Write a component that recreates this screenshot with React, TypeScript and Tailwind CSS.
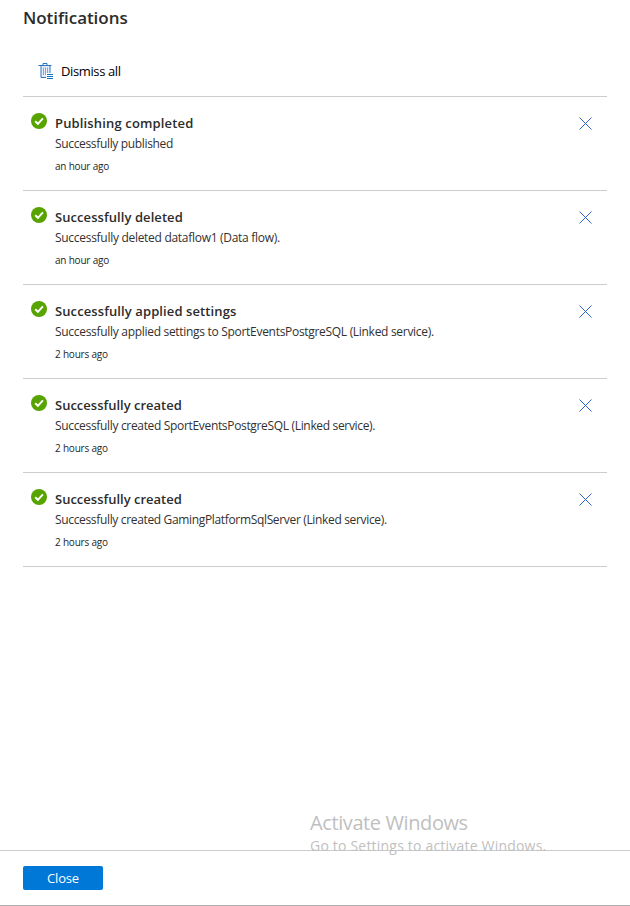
interface Notice {
  title: string;
  body: string;
  time: string;
  titleTracking: string;
  bodyTracking: string;
}

const notices: Notice[] = [
  { title: 'Publishing completed', body: 'Successfully published', time: 'an hour ago', titleTracking: 'tracking-[0.15px]', bodyTracking: 'tracking-[-0.34px]' },
  { title: 'Successfully deleted', body: 'Successfully deleted dataflow1 (Data flow).', time: 'an hour ago', titleTracking: 'tracking-[0.07px]', bodyTracking: 'tracking-[-0.29px]' },
  { title: 'Successfully applied settings', body: 'Successfully applied settings to SportEventsPostgreSQL (Linked service).', time: '2 hours ago', titleTracking: 'tracking-[0.1px]', bodyTracking: 'tracking-[-0.3px]' },
  { title: 'Successfully created', body: 'Successfully created SportEventsPostgreSQL (Linked service).', time: '2 hours ago', titleTracking: 'tracking-[0px]', bodyTracking: 'tracking-[-0.33px]' },
  { title: 'Successfully created', body: 'Successfully created GamingPlatformSqlServer (Linked service).', time: '2 hours ago', titleTracking: 'tracking-[0px]', bodyTracking: 'tracking-[-0.34px]' },
];

function TrashIcon() {
  return (
    <svg className="h-[17px] w-4 shrink-0" viewBox="0 0 16 17" fill="none">
      <path d="M3 4h9v11H3z" fill="#e3ecf8" />
      <path d="M5 3V1.5h4V3M.5 3.5h13M3 3.5v12h5.5M12 3.5v7.5" stroke="#2b76c4" strokeWidth="1" />
      <path d="M5.5 5.5v7.5M7.5 5.5v7.5M9.5 5.5v6" stroke="#d9859d" strokeWidth="1" />
      <path d="M8 11h8v6H8z" fill="#fff" />
      <path d="M9 12.5h6M9 14.5h6M9 16.5h6" stroke="#1473c5" strokeWidth="1" />
    </svg>
  );
}

function SuccessIcon() {
  return (
    <svg className="mt-4 h-4 w-4 shrink-0" viewBox="0 0 16 16" fill="none">
      <circle cx="8" cy="8" r="8" fill="#57a300" />
      <path d="M4.2 8.2 6.9 10.8 11.9 5.3" stroke="#fff" strokeWidth="2" />
    </svg>
  );
}

function NoticeRow({ notice }: { notice: Notice }) {
  return (
    <li className="flex h-[94px] border-b border-[#cccccc] pl-2">
      <SuccessIcon />
      <div className="ml-2 flex-1 whitespace-nowrap">
        <h2 className={`mt-4 text-[13px] leading-5 font-semibold text-[#2c2c2c] ${notice.titleTracking}`}>{notice.title}</h2>
        <p className={`mt-px text-[12px] leading-5 text-[#323130] ${notice.bodyTracking}`}>{notice.body}</p>
        <p className="mt-1 text-[10px] leading-4 tracking-[-0.2px] text-[#262626]">{notice.time}</p>
      </div>
      <button className="mt-5 mr-[15px] h-[13px] w-[13px]" aria-label="Dismiss">
        <svg className="h-[13px] w-[13px]" viewBox="0 0 13 13">
          <path d="M.5.5l12 12M12.5.5l-12 12" stroke="#2f62cc" strokeWidth="1" />
        </svg>
      </button>
    </li>
  );
}

export default function App() {
  return (
    <div className="relative flex h-[906px] w-[630px] flex-col overflow-hidden border-b border-[#adadad] bg-white font-['Open_Sans','Noto_Sans',sans-serif]">
      <main className="flex-1 px-[23px]">
        <h1 className="pt-[6px] text-[17px] leading-6 font-semibold tracking-[-0.05px] text-[#2c2c2c]">Notifications</h1>
        <div className="mt-8 flex h-[35px] items-start border-b border-[#cccccc] pl-[15px]">
          <TrashIcon />
          <button className="ml-[7px] text-[13px] leading-[19px] tracking-[-0.38px] whitespace-nowrap text-black">Dismiss all</button>
        </div>
        <ul>
          {notices.map((notice, i) => <NoticeRow key={i} notice={notice} />)}
        </ul>
      </main>
      <footer className="h-[55px] border-t border-[#cccccc] px-[23px] pt-[15px]">
        <button className="block h-6 w-20 rounded-[2px] bg-[#0078d7] text-[13px] leading-6 tracking-[-0.2px] text-white">Close</button>
      </footer>
      <div className="pointer-events-none absolute top-[810px] left-[310px] whitespace-nowrap text-[#bfbfbf]">
        <p className="text-[20px] leading-[26px] tracking-[-0.4px]">Activate Windows</p>
        <p className="text-[14px] leading-5 tracking-[0.2px]">Go to Settings to activate Windows.</p>
      </div>
    </div>
  );
}
